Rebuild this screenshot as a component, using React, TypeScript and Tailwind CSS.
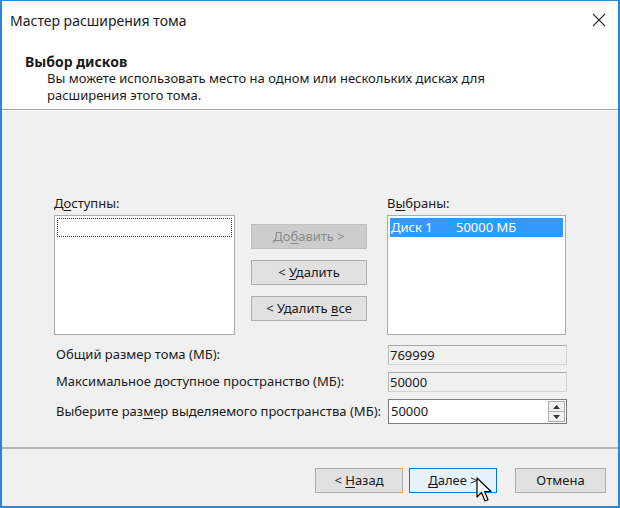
import React from "react";

function U({ children }: { children: React.ReactNode }) {
  return <span className="underline underline-offset-2">{children}</span>;
}

function Btn({
  children,
  variant = "normal",
  className = "",
}: {
  children: React.ReactNode;
  variant?: "normal" | "disabled" | "default";
  className?: string;
}) {
  const look =
    variant === "disabled"
      ? "bg-[#cccccc] border-[#bfbfbf] text-[#8a8a8a]"
      : variant === "default"
      ? "bg-[#e5f1fb] border-[#0078d7] text-[#1a1a1a]"
      : "bg-[#e1e1e1] border-[#adadad] text-[#1a1a1a]";
  return (
    <div
      className={`flex items-center justify-center border text-[13px] ${look} ${className}`}
    >
      <span className="whitespace-pre">{children}</span>
    </div>
  );
}

function Cursor() {
  return (
    <svg
      className="absolute left-[474px] top-[476px]"
      width="18"
      height="28"
      viewBox="0 0 18 28"
    >
      <path
        d="M1 1 L1 20 L5.5 15.5 L9 24 L12 22.8 L8.6 14.5 L15 14.5 Z"
        fill="#ffffff"
        stroke="#000000"
        strokeWidth="1.2"
        strokeLinejoin="round"
      />
    </svg>
  );
}

export default function App() {
  return (
    <div className="relative w-[620px] h-[508px] flex flex-col bg-[#f0f0f0] border-x-2 border-b-2 border-t border-[#2b86d6] font-['Noto_Sans',sans-serif] text-[#1a1a1a] overflow-hidden">
      <div className="bg-white h-[108px] flex flex-col">
        <div className="h-[38px] flex items-center justify-between pl-[8px] pr-[12px]">
          <span className="text-[14px] text-[#1a1a1a]">Мастер расширения тома</span>
          <svg width="14" height="14" viewBox="0 0 14 14">
            <path d="M1 1 L13 13 M13 1 L1 13" stroke="#333" strokeWidth="1.2" />
          </svg>
        </div>
        <div className="pl-[23px] pt-[14px] text-[14px] font-bold leading-[17px]">
          Выбор дисков
        </div>
        <div className="pl-[45px] text-[13px] leading-[17px]">
          Вы можете использовать место на одном или нескольких дисках для
          <br />
          расширения этого тома.
        </div>
      </div>
      <div className="border-t border-[#a0a0a0] border-b border-b-white" />

      <div className="flex-1 flex flex-col pl-[52px] pt-[84px]">
        <div className="flex">
          <div className="w-[181px] flex flex-col">
            <div className="text-[13px] leading-[17px] h-[20px]">
              Д<U>о</U>ступны:
            </div>
            <div className="h-[120px] bg-white border border-[#ababab] p-[2px]">
              <div className="h-[19px] border border-dotted border-[#333]" />
            </div>
          </div>
          <div className="ml-[16px] w-[116px] flex flex-col gap-[11px] pt-[29px]">
            <Btn variant="disabled" className="h-[25px]">
              До<U>б</U>авить &gt;
            </Btn>
            <Btn className="h-[25px]">
              &lt; <U>У</U>далить
            </Btn>
            <Btn className="h-[25px]">
              &lt; Удалить <U>в</U>се
            </Btn>
          </div>
          <div className="ml-[20px] w-[179px] flex flex-col">
            <div className="text-[13px] leading-[17px] h-[20px]">
              В<U>ы</U>браны:
            </div>
            <div className="h-[120px] bg-white border border-[#ababab] p-[2px]">
              <div className="h-[19px] bg-[#3399ff] text-white text-[13px] leading-[19px] flex">
                <span className="w-[66px] pl-[1px]">Диск 1</span>
                <span>50000 МБ</span>
              </div>
            </div>
          </div>
        </div>

        <div className="mt-[10px] flex flex-col gap-[7px] text-[13px]">
          <div className="flex items-center h-[20px]">
            <span className="w-[334px] pl-[2px]">Общий размер тома (МБ):</span>
            <div className="w-[179px] h-[20px] border border-[#d4d4d4] border-t-[#a8a8a8] border-l-[#b8b8b8] bg-[#f0f0f0] leading-[18px] pl-[1px]">
              769999
            </div>
          </div>
          <div className="flex items-center h-[20px]">
            <span className="w-[334px] pl-[2px]">
              Максимальное доступное пространство (МБ):
            </span>
            <div className="w-[179px] h-[20px] border border-[#d4d4d4] border-t-[#a8a8a8] border-l-[#b8b8b8] bg-[#f0f0f0] leading-[18px] pl-[1px]">
              50000
            </div>
          </div>
          <div className="flex items-center h-[25px]">
            <span className="w-[334px] pl-[2px]">
              Выберите раз<U>м</U>ер выделяемого пространства (МБ):
            </span>
            <div className="w-[179px] h-[25px] border border-[#7a7a7a] bg-white flex items-center justify-between">
              <span className="pl-[2px]">50000</span>
              <div className="flex flex-col h-full py-[1px] pr-[1px]">
                <div className="flex-1 w-[17px] border border-[#adadad] bg-[#f0f0f0] flex items-center justify-center">
                  <svg width="7" height="4" viewBox="0 0 7 4">
                    <path d="M0 4 L3.5 0 L7 4 Z" fill="#333" />
                  </svg>
                </div>
                <div className="flex-1 w-[17px] border border-t-0 border-[#adadad] bg-[#f0f0f0] flex items-center justify-center">
                  <svg width="7" height="4" viewBox="0 0 7 4">
                    <path d="M0 0 L3.5 4 L7 0 Z" fill="#333" />
                  </svg>
                </div>
              </div>
            </div>
          </div>
        </div>
      </div>

      <div className="border-t-2 border-[#b4b4b4]" />
      <div className="h-[57px] flex items-start justify-end pr-[12px] pt-[19px] gap-[6px]">
        <Btn className="w-[88px] h-[25px]">
          &lt; <U>Н</U>азад
        </Btn>
        <Btn variant="default" className="w-[88px] h-[25px]">
          <U>Д</U>алее &gt;
        </Btn>
        <Btn className="w-[91px] h-[25px] ml-[12px]">Отмена</Btn>
      </div>
      <Cursor />
    </div>
  );
}
